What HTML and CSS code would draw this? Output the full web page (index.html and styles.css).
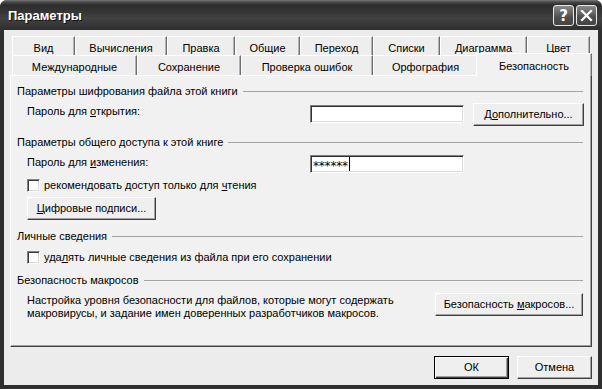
FILE: index.html
```html
<!DOCTYPE html>
<html lang="ru">
<head>
<meta charset="utf-8">
<title>Параметры</title>
<link rel="stylesheet" href="styles.css">
</head>
<body>
<div class="window">
  <div class="titlebar">
    <span class="title">Параметры</span>
    <div class="tbtns">
      <span class="tbtn help">?</span>
      <span class="tbtn close"><svg width="13" height="13" viewBox="0 0 13 13"><path d="M2 2 L11 11 M11 2 L2 11" stroke="#fff" stroke-width="2.2" stroke-linecap="square"/></svg></span>
    </div>
  </div>
  <div class="client">
    <div class="tabs">
      <div class="tabrow back">
        <span class="tab">Вид</span>
        <span class="tab">Вычисления</span>
        <span class="tab">Правка</span>
        <span class="tab">Общие</span>
        <span class="tab">Переход</span>
        <span class="tab">Списки</span>
        <span class="tab">Диаграмма</span>
        <span class="tab">Цвет</span>
      </div>
      <div class="tabrow front">
        <span class="tab">Международные</span>
        <span class="tab">Сохранение</span>
        <span class="tab">Проверка ошибок</span>
        <span class="tab">Орфография</span>
        <span class="tab selected">Безопасность</span>
      </div>
    </div>
    <div class="panel">
      <div class="group-title g1">Параметры шифрования файла этой книги</div>
      <div class="indent pwrow r1">
        <span class="label">Пароль для <u>о</u>ткрытия:</span>
        <span class="input"></span>
        <span class="btn w111"><span>Д<u>о</u>полнительно...</span></span>
      </div>
      <div class="group-title g2">Параметры общего доступа к этой книге</div>
      <div class="indent pwrow r2">
        <span class="label">Пароль для <u>и</u>зменения:</span>
        <span class="input"><span class="stars">******</span><span class="caret"></span></span>
      </div>
      <div class="indent check c1"><span class="box"></span><span>рекомендовать доступ только для <u>ч</u>тения</span></div>
      <div class="indent b2row"><span class="btn w129"><span><u>Ц</u>ифровые подписи...</span></span></div>
      <div class="group-title g3">Личные сведения</div>
      <div class="indent check c2"><span class="box"></span><span>уда<u>л</u>ять личные сведения из файла при его сохранении</span></div>
      <div class="group-title g4">Безопасность макросов</div>
      <div class="indent macro">
        <p class="para">Настройка уровня безопасности для файлов, которые могут содержать макровирусы, и задание имен доверенных разработчиков макросов.</p>
        <span class="btn w148"><span>Безопасность <u>м</u>акросов...</span></span>
      </div>
    </div>
    <div class="footer">
      <span class="btn default"><span>ОК</span></span>
      <span class="btn"><span>Отмена</span></span>
    </div>
  </div>
</div>
</body>
</html>
```
FILE: styles.css
```css
html, body {
  margin: 0;
  padding: 0;
  background: #fff;
}
body {
  font-family: "Liberation Sans", Arial, sans-serif;
  font-size: 11px;
  line-height: 13px;
  color: #000;
}
u { text-decoration: underline; text-underline-offset: 1px; }

.window {
  width: 602px;
  height: 389px;
  display: flex;
  flex-direction: column;
  background: #2f2f2f;
  border-radius: 7px 7px 0 0;
  overflow: hidden;
}
.titlebar {
  height: 30px;
  flex: none;
  display: flex;
  align-items: center;
  padding: 0 5px 0 8px;
  background: linear-gradient(to bottom, #7a7a7a 0, #4a4a4a 2px, #2c2c2c 5px, #383838 45%, #424242 60%, #2f2f2f 100%);
}
.title {
  flex: 1;
  color: #fff;
  font-weight: bold;
  font-size: 13px;
  text-shadow: 1px 1px 0 #111;
  padding-top: 1px;
}
.tbtns { display: flex; gap: 2px; margin-top: 1px; }
.tbtn {
  width: 21px;
  height: 21px;
  box-sizing: border-box;
  border: 1px solid #e8e8e8;
  border-radius: 3px;
  background: linear-gradient(to bottom, #8a8a8a, #4e4e4e 60%, #444);
  color: #fff;
  display: flex;
  align-items: center;
  justify-content: center;
  font: bold 15px "DejaVu Sans", sans-serif;
}

.client {
  flex: 1;
  margin: 0 4px 4px;
  background: #ececec;
  padding: 6px 6px 0;
  display: flex;
  flex-direction: column;
}
.tabs { margin: 0 2px; }
.tabrow { display: grid; }
.tabrow.back {
  grid-template-columns: 63px 92px 68px 65px 73px 67px 87px 63px;
  height: 19px;
}
.tabrow.front {
  grid-template-columns: 125px 104px 132px 105px 112px;
  height: 20px;
}
.tab {
  box-sizing: border-box;
  text-align: center;
  background: #eeeeee;
  border-top: 1px solid #fff;
  border-left: 1px solid #fff;
  border-right: 1px solid #6e6e6e;
  box-shadow: inset -1px 0 0 #b4b4b4;
  white-space: nowrap;
}
.back .tab { padding-top: 5px; }
.front .tab { padding-top: 5px; }
.tab.selected {
  position: relative;
  z-index: 1;
  margin: -2px -2px -1px -2px;
  padding-top: 6px;
  background: #f1f1f1;
}

.panel {
  height: 272px;
  box-sizing: border-box;
  background: #f1f1f1;
  border-top: 1px solid #fff;
  border-left: 1px solid #fff;
  border-right: 1px solid #404040;
  border-bottom: 1px solid #404040;
  box-shadow: inset -1px -1px 0 #a0a0a0;
  padding: 8px 8px 0 6px;
  display: flex;
  flex-direction: column;
}
.group-title {
  display: flex;
  align-items: center;
  gap: 5px;
  height: 14px;
  white-space: nowrap;
}
.group-title::after {
  content: "";
  flex: 1;
  height: 1px;
  background: #a4a4a4;
}
.g2 { margin-top: 9px; }
.g3 { margin-top: 9px; }
.g4 { margin-top: 9px; }
.indent { padding-left: 10px; }

.pwrow {
  display: grid;
  grid-template-columns: 283px 154px 111px;
  align-items: start;
}
.pwrow .btn { margin-left: 9px; }
.r1 { margin-top: 5px; height: 23px; }
.r1 .label, .r1 .input { margin-top: 2px; }
.r2 { margin-top: 6px; height: 18px; }
.r2 .label { margin-top: 1px; }
.input {
  height: 18px;
  box-sizing: border-box;
  background: #fff;
  border-top: 1px solid #808080;
  border-left: 1px solid #808080;
  border-right: 1px solid #fff;
  border-bottom: 1px solid #fff;
  box-shadow: inset 1px 1px 0 #303030, inset -1px -1px 0 #dcdcdc;
  display: flex;
  align-items: center;
  padding-left: 2px;
}
.stars { font-family: "DejaVu Sans", sans-serif; font-size: 12px; line-height: 12px; padding-top: 4px; letter-spacing: -0.2px; }
.caret { width: 1px; height: 14px; background: #000; margin-left: 1px; }

.btn {
  height: 23px;
  width: 75px;
  box-sizing: border-box;
  display: inline-flex;
  align-items: center;
  justify-content: center;
  background: #efefef;
  border-top: 1px solid #fff;
  border-left: 1px solid #fff;
  border-right: 1px solid #404040;
  border-bottom: 1px solid #404040;
  box-shadow: inset -1px -1px 0 #a0a0a0;
  white-space: nowrap;
}
.btn.w111 { width: 111px; }
.btn.w129 { width: 129px; }
.btn.w148 { width: 148px; }
.btn.default {
  border: 1px solid #000;
  box-shadow: inset 1px 1px 0 #fff, inset -1px -1px 0 #404040, inset -2px -2px 0 #a0a0a0;
}

.check {
  display: flex;
  align-items: center;
  gap: 4px;
  height: 13px;
}
.c1 { margin-top: 6px; }
.c2 { margin-top: 8px; }
.box {
  width: 13px;
  height: 13px;
  box-sizing: border-box;
  background: #fff;
  border-top: 1px solid #808080;
  border-left: 1px solid #808080;
  border-right: 1px solid #fff;
  border-bottom: 1px solid #fff;
  box-shadow: inset 1px 1px 0 #404040, inset -1px -1px 0 #d8d8d8;
  flex: none;
}
.b2row { margin-top: 5px; display: flex; }

.macro {
  margin-top: 6px;
  display: flex;
  align-items: flex-start;
  justify-content: space-between;
}
.para {
  margin: 1px 0 0;
  width: 400px;
}

.footer {
  display: flex;
  justify-content: flex-end;
  gap: 8px;
  padding-top: 9px;
}
```
